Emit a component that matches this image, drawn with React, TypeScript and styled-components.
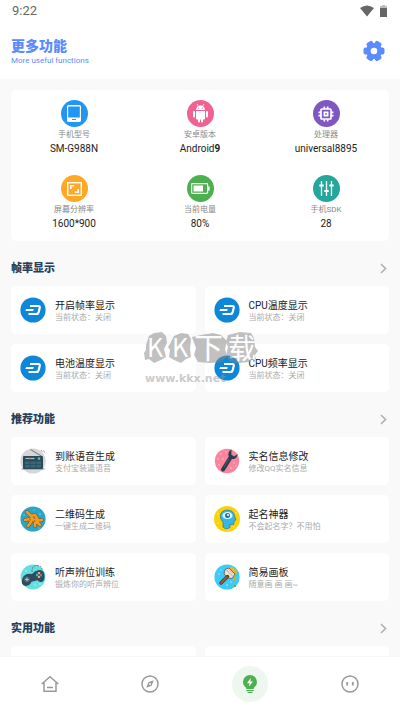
import React from 'react';
import styled, { createGlobalStyle } from 'styled-components';
import { MdMemory } from 'react-icons/md';

const GlobalStyle = createGlobalStyle`
  * { box-sizing: border-box; }
  body { margin: 0; background: #f9f9f9; font-family: Roboto, "Noto Sans CJK SC", sans-serif; color: #222; }
  button { font: inherit; color: inherit; background: none; border: 0; padding: 0; margin: 0; cursor: pointer; }
  h1, h2, p, dl, dt, dd { margin: 0; }
  svg { display: block; }
`;

const Page = styled.div`
  height: 100vh;
  display: flex;
  flex-direction: column;
  overflow: hidden;
`;

const StatusBar = styled.div`
  height: 22px;
  padding: 0 13px 0 12px;
  display: flex;
  align-items: center;
  justify-content: space-between;
  background: #fff;
  color: #666;
  font-size: 13px;
  line-height: 22px;
`;

const StatusIcons = styled.div`
  display: flex;
  align-items: center;
  gap: 6px;
`;

const Header = styled.header`
  height: 57px;
  padding: 0 15px 0 11px;
  display: flex;
  align-items: center;
  justify-content: space-between;
  background: #fff;
  color: #5b8cff;
`;

const PageTitle = styled.h1`
  padding-top: 4px;
  font-size: 14px;
  line-height: 16px;
  font-weight: 900;
`;

const PageSubtitle = styled.p`
  font-size: 8px;
  line-height: 14px;
`;

const Main = styled.main`
  position: relative;
  flex: 1;
  min-height: 0;
  overflow: hidden;
  padding: 11px 11px 0;
`;

const DeviceCard = styled.dl`
  display: grid;
  grid-template-columns: repeat(3, 1fr);
  row-gap: 20px;
  padding: 10px 0 11px;
  background: #fff;
  border-radius: 5px;
`;

const DeviceItem = styled.div`
  display: flex;
  flex-direction: column;
  align-items: center;
`;

const Disc = styled.span<{ $color: string }>`
  width: 27px;
  height: 27px;
  margin-bottom: 1px;
  border-radius: 50%;
  background: ${(p) => p.$color};
  color: #fff;
  display: flex;
  align-items: center;
  justify-content: center;
`;

const DeviceLabel = styled.dt`
  display: flex;
  flex-direction: column;
  align-items: center;
  font-size: 8px;
  line-height: 14px;
  color: #888;
`;

const DeviceValue = styled.dd`
  font-size: 10px;
  line-height: 13px;
  color: #222;
`;

const SectionHeader = styled.div`
  height: 45px;
  padding-top: 10px;
  display: flex;
  align-items: center;
  justify-content: space-between;
  color: #24405a;
`;

const SectionTitle = styled.h2`
  font-size: 11px;
  line-height: 16px;
  font-weight: 900;
`;

const MoreButton = styled.button`
  padding: 2px;
`;

const CardGrid = styled.div`
  display: grid;
  grid-template-columns: 1fr 1fr;
  gap: 10px 9px;
`;

const FeatureCard = styled.button`
  height: 48px;
  padding: 0 9px;
  display: flex;
  align-items: center;
  gap: 9px;
  background: #fff;
  border-radius: 5px;
  text-align: left;
`;

const FeatureText = styled.span`
  padding-top: 3px;
  display: flex;
  flex-direction: column;
`;

const FeatureTitle = styled.span`
  font-size: 10px;
  line-height: 12px;
  color: #222;
`;

const FeatureNote = styled.span`
  font-size: 8px;
  line-height: 12px;
  color: #aaa;
`;

const NavBar = styled.nav`
  height: 54px;
  display: grid;
  grid-template-columns: repeat(4, 1fr);
  justify-items: center;
  align-items: center;
  background: #fff;
  border-top: 1px solid #f7f7f7;
`;

const NavButton = styled.button<{ $active?: boolean }>`
  width: 36px;
  height: 36px;
  border-radius: 50%;
  display: flex;
  align-items: center;
  justify-content: center;
  color: ${(p) => (p.$active ? '#4caf50' : '#999')};
  background: ${(p) => (p.$active ? '#edf7ee' : 'transparent')};
`;

const Watermark = styled.div`
  position: absolute;
  left: 50%;
  top: 247px;
  margin-left: -57px;
  opacity: 0.5;
  pointer-events: none;
`;

const WatermarkUrl = styled.div`
  padding-left: 2px;
  font: bold 11px/14px "DejaVu Sans", sans-serif;
  color: #999;
`;

const Wifi = () => (
  <svg width="14" height="12" viewBox="0 0 14 12" fill="#666"><path d="M0 3Q7-2 14 3L7 11.500Z" /></svg>
);

const StatusBattery = () => (
  <svg width="7" height="12" viewBox="0 0 7 12">
    <path d="M2 0h3v1h2v3H0V1h2z" fill="#bbb" /><path d="M0 3h7v9H0z" fill="#666" />
  </svg>
);

const Gear = () => (
  <svg width="22" height="22" viewBox="0 0 22 22" fill="#5b8cff">
    <circle cx="11" cy="11" r="8" />
    {[0, 60, 120].map((angle) => (
      <rect key={angle} x=".5" y="7.500" width="21" height="7" rx="2" transform={`rotate(${angle} 11 11)`} />
    ))}
    <circle cx="11" cy="11" r="3.300" fill="#fff" />
  </svg>
);

const Phone = () => (
  <svg width="14" height="17" viewBox="0 0 14 17">
    <rect width="14" height="17" rx="1.500" fill="#fff" /><rect x="1.200" y="1.500" width="11.600" height="11" fill="#2196f3" />
    <rect x="5" y="14" width="4" height="1" fill="#2196f3" />
  </svg>
);

const Robot = () => (
  <svg width="17" height="19" viewBox="0 0 17 19" fill="#fff">
    <path d="M4 6a4.500 4.500 0 0 1 9 0Z" />
    <path d="M4 7h9v7.500q0 1-1 1h-1v2a1 1 0 0 1-2 0v-2H8v2a1 1 0 0 1-2 0v-2H5q-1 0-1-1Z" />
    <rect x="1" y="7" width="2" height="6.500" rx="1" /><rect x="14" y="7" width="2" height="6.500" rx="1" />
    <path d="M5 0l1.600 2.500M12 0l-1.600 2.500" stroke="#fff" strokeWidth=".8" />
    <circle cx="6.700" cy="4" r=".6" fill="#f06292" /><circle cx="10.300" cy="4" r=".6" fill="#f06292" />
  </svg>
);

const Screen = () => (
  <svg width="15" height="14" viewBox="0 0 15 14" fill="none" stroke="#fff" strokeWidth="1.400">
    <rect x=".7" y=".7" width="13.600" height="12.600" />
    <path d="M3.800 7V3.800H7.200M11.200 7v3.200H7.800" strokeWidth="1.600" />
  </svg>
);

const Battery = () => (
  <svg width="19" height="11" viewBox="0 0 19 11">
    <rect x=".6" y=".6" width="16" height="9.800" rx=".8" fill="none" stroke="#fff" strokeWidth="1.200" />
    <path d="M2.500 2.500h9.500v6H2.500zM17 3.500h1.600v4H17z" fill="#fff" />
  </svg>
);

const Sliders = () => (
  <svg width="15" height="15" viewBox="0 0 15 15" fill="none" stroke="#fff">
    <path d="M2.500 0v15M7.500 0v15M12.500 0v15" strokeWidth="1.300" />
    <path d="M.3 4.500h4.400M5.300 10h4.400M10.300 4.500h4.400" strokeWidth="2" />
  </svg>
);

const Art = ({ children }: { children: React.ReactNode }) => (
  <svg width="26" height="26" viewBox="0 0 26 26">{children}</svg>
);

const DashArt = () => (
  <Art>
    <circle cx="13" cy="13" r="12.600" fill="#0d87d8" />
    <path d="M10 9h8.300q1.800 0 1.400 1.900l-1 4.200q-.5 1.900-2.400 1.900H8.500" fill="none" stroke="#fff" strokeWidth="2.200" strokeLinejoin="round" />
    <path d="M6.200 12h7.600l-.7 2.100H5.300z" fill="#fff" />
  </Art>
);

const RadioArt = () => (
  <Art>
    <circle cx="13" cy="13" r="12.600" fill="#d9d5d6" />
    <path d="M10.500 1.500L22 8.500" stroke="#59676c" strokeWidth=".9" />
    <path d="M21 2l1.500 2M23.500 2.500l1 2" stroke="#7c9ba5" strokeWidth=".8" />
    <path d="M1.500 21h23" stroke="#7b8a90" />
    <rect x="3" y="8" width="20" height="13" rx="1" fill="#264c5c" />
    <path d="M5 13.500h16v6H5z" fill="#3a6878" />
    <path d="M10 13.500v6M16 13.500v6M5 16.500h16" stroke="#264c5c" strokeWidth=".8" />
    <path d="M5.500 10.500h9" stroke="#a9c4c7" strokeWidth="1.200" /><circle cx="10" cy="10.500" r=".8" fill="#e26d5a" />
    <circle cx="19" cy="10.600" r="1.300" fill="#87a8ae" />
  </Art>
);

const WrenchArt = () => (
  <Art>
    <circle cx="13" cy="13" r="12.200" fill="#fb839d" />
    <g fill="#ffd5dc">
      <circle cx="7" cy="6" r=".7" /><circle cx="12" cy="4" r=".7" /><circle cx="4" cy="11" r=".7" /><circle cx="9" cy="11" r=".7" />
      <circle cx="5" cy="17" r=".7" /><circle cx="20" cy="15" r=".7" /><circle cx="17" cy="20" r=".7" /><circle cx="22" cy="18" r=".7" />
    </g>
    <path d="M9 21.500L16.500 9.500" stroke="#263e4e" strokeWidth="4" strokeLinecap="round" />
    <path d="M17.500 1.200q-4 3-3 6.300t4.200 3.500q4 .2 5-5l-3.700 2.400-2.700-1.800Z" fill="#263e4e" />
    <path d="M10 19l5-8" stroke="#47616f" strokeWidth="1" />
  </Art>
);

const CoralArt = () => (
  <Art>
    <circle cx="13" cy="13" r="12.600" fill="#2ba5c7" />
    <g fill="none" strokeLinecap="round" strokeLinejoin="round">
      <path d="M7 6l4 4 5 5M5 14l5-1 6 2M8 20l3-4-1-3M15 20v-5M22 14l-6 1 4 4M11 10l4-1 3 5" stroke="#75501d" strokeWidth="3.600" />
      <path d="M7 6l4 4 5 5M5 14l5-1 6 2M8 20l3-4-1-3M15 20v-5M22 14l-6 1 4 4M11 10l4-1 3 5" stroke="#f39a20" strokeWidth="2.600" />
    </g>
    <path d="M9 13l2 1M13 11l2 2M14 16l1-2" stroke="#9b5b18" strokeWidth=".8" />
    <g fill="#a8e1eb"><circle cx="14" cy="4" r=".6" /><circle cx="20" cy="8" r=".7" /><circle cx="4" cy="9" r=".6" /><circle cx="19" cy="22" r=".6" /></g>
  </Art>
);

const HeadArt = () => (
  <Art>
    <circle cx="13" cy="13" r="13" fill="#fbd305" />
    <path d="M9 21v-5Q5.500 13 6.500 8.500Q8 4 13.500 4Q20 4.500 20.500 10l1.500 4-1.800.8-.4 3.600-3.800.2v2.800q-4 3-7-.4Z" fill="#36b7e9" stroke="#2672a4" strokeWidth=".7" />
    <ellipse cx="13.500" cy="9.500" rx="5" ry="3.600" fill="#e2faff" /><circle cx="13.500" cy="9.500" r="2.500" fill="#286b9c" /><circle cx="14" cy="9" r="1" fill="#fff" />
    <g fill="#fff4a5"><circle cx="4" cy="8" r=".7" /><circle cx="4" cy="17" r=".7" /><circle cx="22" cy="7" r=".7" /><circle cx="20" cy="21" r=".7" /><circle cx="14" cy="24" r=".6" /></g>
  </Art>
);

const GamepadArt = () => (
  <Art>
    <circle cx="13" cy="13" r="12.400" fill="#63dfdf" />
    <path d="M12 8q0-7 5-6.500 5 .5 5 4" fill="none" stroke="#46636e" strokeWidth=".8" strokeDasharray="2 1" />
    <path d="M5 11q3-2 7-1 3-3.500 7-4 5 0 5.500 5 .5 6-3 7-2 .3-4-1.800l-6 1.500Q10 21.500 6 22q-5-.3-4-6 .5-3.500 3-5Z" fill="#304b5d" />
    <circle cx="7" cy="15.500" r="3" fill="#48677a" /><path d="M5.300 15.500h3.400M7 13.800v3.400" stroke="#b7cbd1" />
    <circle cx="19" cy="11" r="3" fill="#48677a" /><circle cx="19" cy="9" r="1" fill="#ffd15a" /><circle cx="21" cy="11" r="1" fill="#ee5e58" /><circle cx="17" cy="11" r="1" fill="#56bfe8" /><circle cx="19" cy="13" r="1" fill="#ffd15a" />
    <g fill="#c7ffff"><circle cx="6" cy="7" r=".7" /><circle cx="15" cy="21" r=".7" /><circle cx="20" cy="20" r=".7" /></g>
  </Art>
);

const BrushArt = () => (
  <Art>
    <circle cx="13" cy="13" r="12.600" fill="#3acbfa" />
    <path d="M13.500 4.500l4.500-2 5.500 5-3 4.500Z" fill="#f3b51e" />
    <path d="M21 8v9" stroke="#dfaa1d" strokeWidth="1.600" /><circle cx="21" cy="22" r="1.100" fill="#b87c1c" />
    <path d="M11 5.500l4-1.500 6 6-3 4.500-3.500-.5-4.500-4Z" fill="#eee0d2" stroke="#66564f" strokeWidth=".8" />
    <path d="M12.500 6l6 6M15 5.500l4 4" stroke="#9e8d83" strokeWidth=".6" />
    <path d="M13.500 12.500L7 19" stroke="#64392d" strokeWidth="3.500" strokeLinecap="round" /><path d="M13 13l-6 6" stroke="#a36042" strokeWidth="1.600" strokeLinecap="round" />
    <g fill="#b9f0ff"><circle cx="5" cy="10" r=".8" /><circle cx="7" cy="6" r=".7" /><circle cx="13" cy="21" r=".8" /><circle cx="17" cy="18" r=".8" /></g>
  </Art>
);

const Chevron = () => (
  <svg width="7" height="11" viewBox="0 0 7 11" fill="none" stroke="#b0b0b0" strokeWidth="1.600"><path d="M1 1l4.500 4.500L1 10" /></svg>
);

const Home = () => (
  <svg width="18" height="18" viewBox="0 0 18 18" fill="none" stroke="currentColor" strokeWidth="1.500">
    <path d="M.7 9L9 1.700 17.300 9M3 7.500v8.700h12V7.500M6 12.500h6" />
  </svg>
);

const Compass = () => (
  <svg width="18" height="18" viewBox="0 0 18 18" fill="none" stroke="currentColor" strokeWidth="1.500">
    <circle cx="9" cy="9" r="8" /><path d="M12.700 5.300l-2 5.400-5.400 2 2-5.400Z" fill="currentColor" stroke="none" /><circle cx="9" cy="9" r="1" fill="#fff" stroke="none" />
  </svg>
);

const Bulb = () => (
  <svg width="16" height="18" viewBox="0 0 16 18" fill="currentColor">
    <path d="M8 0a7 7 0 0 0-7 7c0 3 1.700 4.500 3.200 5.700V14h7.600v-1.300C13.300 11.500 15 10 15 7a7 7 0 0 0-7-7ZM4.200 15h7.600v1H4.200zM5 16.800h6l-1 1.200H6Z" />
    <path d="M8.700 3L5 8.200h2.500L7 11.500l4-5H8.400Z" fill="#fff" />
  </svg>
);

const Face = () => (
  <svg width="18" height="18" viewBox="0 0 18 18" fill="none" stroke="currentColor" strokeWidth="1.500">
    <circle cx="9" cy="9" r="8" /><path d="M6.200 7v3.500M11.800 7v3.500" strokeWidth="1.800" />
  </svg>
);

const WatermarkMark = () => (
  <svg width="120" height="46" viewBox="0 0 120 46">
    <g fill="#858585">
      <path d="M3 19l3-9 5-3 8-1 4 4 1 7-3 6 2 8-5 3-7 3-5-4-4 1-1-7 2-3Z" />
      <path d="M27 18l4-8 7-3 7 1 3 5-1 10 1 8-5 2-5 4-7-3-5-3 1-7-2-3Z" />
      <path d="M49 11l9-2 12-2 8 2 6 6-2 8 2 7-5 6-12 1-12-1-4-7 2-7Z" />
      <path d="M85 9l12-3 11 1 3 5 1 9 3 4-3 4 1 4-7 3-10 1-9-1-4-6 2-9-2-5Z" />
    </g>
    <g fill="#fff" fontFamily='"Noto Sans CJK SC", sans-serif' fontSize="25">
      <text x="4" y="31">K</text><text x="29" y="31">K</text>
      <text x="51" y="33" fontSize="29">下</text><text x="85" y="33" fontSize="28">载</text>
    </g>
  </svg>
);

const device = [
  { label: '手机型号', value: 'SM-G988N', color: '#2196f3', icon: <Phone /> },
  { label: '安卓版本', value: <>Android<b>9</b></>, color: '#f06292', icon: <Robot /> },
  { label: '处理器', value: 'universal8895', color: '#7e57c2', icon: <MdMemory size={20} /> },
  { label: '屏幕分辨率', value: '1600*900', color: '#ffa726', icon: <Screen /> },
  { label: '当前电量', value: '80%', color: '#4caf50', icon: <Battery /> },
  { label: '手机SDK', value: '28', color: '#26a69a', icon: <Sliders /> },
];

const sections = [
  {
    title: '帧率显示',
    items: ['开启帧率显示', 'CPU温度显示', '电池温度显示', 'CPU频率显示'].map((title) => ({
      title, note: '当前状态：关闭', art: <DashArt />,
    })),
  },
  {
    title: '推荐功能',
    items: [
      { title: '到账语音生成', note: '支付宝装逼语音', art: <RadioArt /> },
      { title: '实名信息修改', note: '修改QQ实名信息', art: <WrenchArt /> },
      { title: '二维码生成', note: '一键生成二维码', art: <CoralArt /> },
      { title: '起名神器', note: '不会起名字？不用怕', art: <HeadArt /> },
      { title: '听声辨位训练', note: '锻炼你的听声辨位', art: <GamepadArt /> },
      { title: '简易画板', note: '随意画 画 画~', art: <BrushArt /> },
    ],
  },
];

const SectionHead = ({ title }: { title: string }) => (
  <SectionHeader>
    <SectionTitle>{title}</SectionTitle>
    <MoreButton aria-label={title}><Chevron /></MoreButton>
  </SectionHeader>
);

export default function App() {
  return (
    <Page lang="zh-CN">
      <GlobalStyle />
      <StatusBar>
        <span>9:22</span>
        <StatusIcons><Wifi /><StatusBattery /></StatusIcons>
      </StatusBar>
      <Header>
        <div>
          <PageTitle>更多功能</PageTitle>
          <PageSubtitle>More useful functions</PageSubtitle>
        </div>
        <button aria-label="设置"><Gear /></button>
      </Header>
      <Main>
        <DeviceCard>
          {device.map((d) => (
            <DeviceItem key={d.label}>
              <DeviceLabel><Disc $color={d.color}>{d.icon}</Disc>{d.label}</DeviceLabel>
              <DeviceValue>{d.value}</DeviceValue>
            </DeviceItem>
          ))}
        </DeviceCard>
        {sections.map((s) => (
          <section key={s.title}>
            <SectionHead title={s.title} />
            <CardGrid>
              {s.items.map((item) => (
                <FeatureCard key={item.title}>
                  {item.art}
                  <FeatureText>
                    <FeatureTitle>{item.title}</FeatureTitle>
                    <FeatureNote>{item.note}</FeatureNote>
                  </FeatureText>
                </FeatureCard>
              ))}
            </CardGrid>
          </section>
        ))}
        <section>
          <SectionHead title="实用功能" />
          <CardGrid>
            <FeatureCard aria-hidden="true" tabIndex={-1} />
            <FeatureCard aria-hidden="true" tabIndex={-1} />
          </CardGrid>
        </section>
        <Watermark>
          <WatermarkMark />
          <WatermarkUrl>www.kkx.net</WatermarkUrl>
        </Watermark>
      </Main>
      <NavBar>
        <NavButton aria-label="首页"><Home /></NavButton>
        <NavButton aria-label="发现"><Compass /></NavButton>
        <NavButton aria-label="功能" $active aria-current="page"><Bulb /></NavButton>
        <NavButton aria-label="我的"><Face /></NavButton>
      </NavBar>
    </Page>
  );
}
